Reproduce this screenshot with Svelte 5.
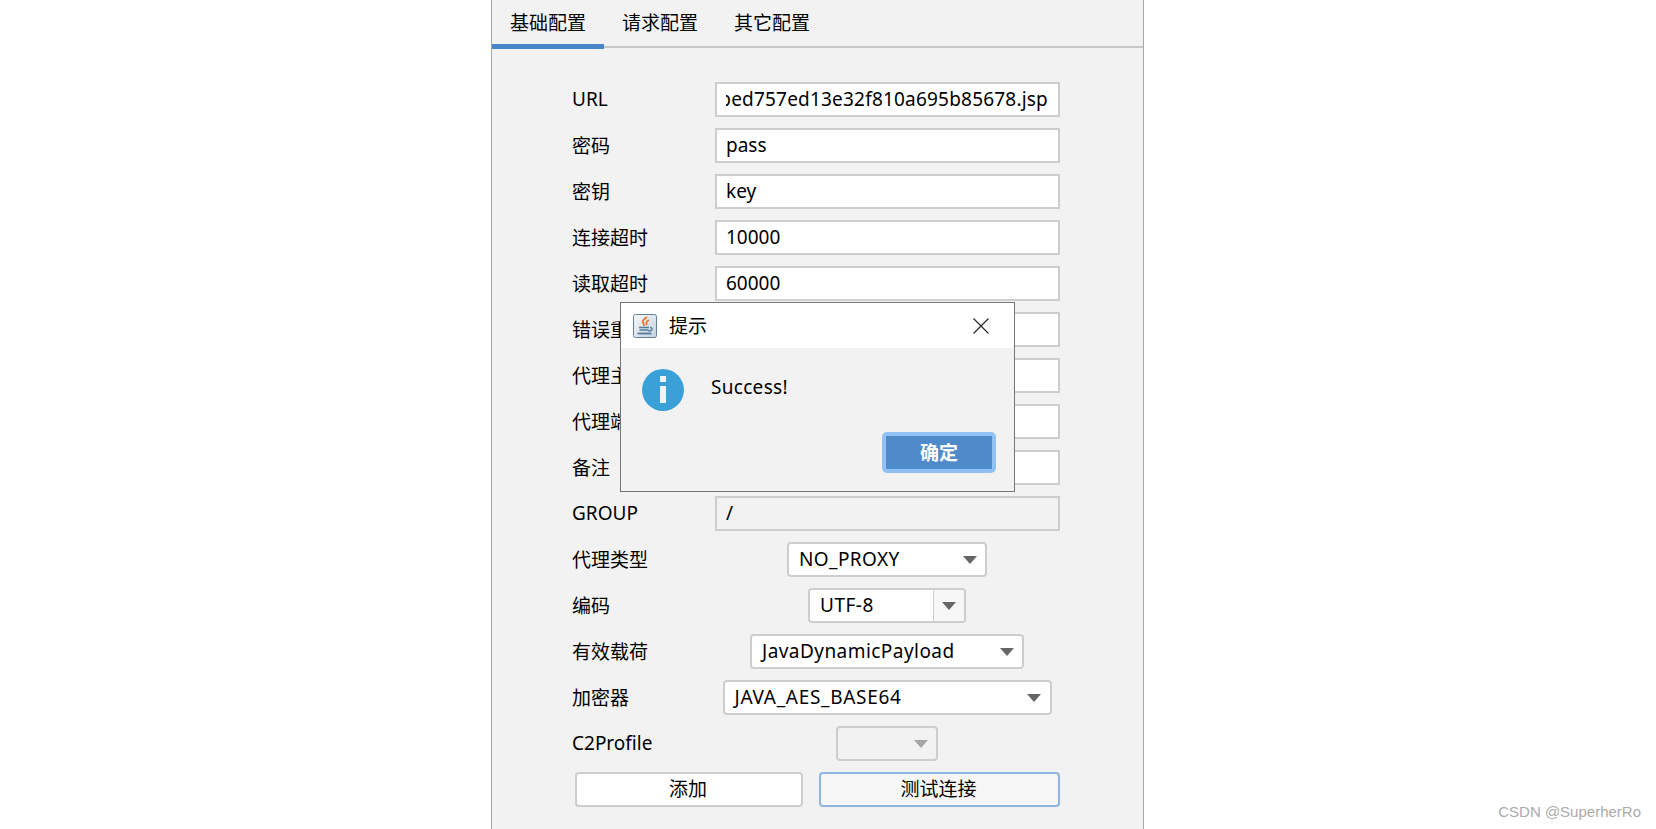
<script>
	const fields = [
		{ label: 'URL', value: 'bed757ed13e32f810a695b85678.jsp', scrolled: true },
		{ label: '密码', value: 'pass' },
		{ label: '密钥', value: 'key' },
		{ label: '连接超时', value: '10000' },
		{ label: '读取超时', value: '60000' },
		{ label: '错误重试', value: '' },
		{ label: '代理主机', value: '' },
		{ label: '代理端口', value: '' },
		{ label: '备注', value: '' },
		{ label: 'GROUP', value: '/', disabled: true }
	];

	const combos = [
		{ label: '代理类型', value: 'NO_PROXY', width: 200, spacing: 0.4 },
		{ label: '编码', value: 'UTF-8', width: 158, editable: true, spacing: 0.5 },
		{ label: '有效载荷', value: 'JavaDynamicPayload', width: 274, spacing: 0.45 },
		{ label: '加密器', value: 'JAVA_AES_BASE64', width: 329, spacing: 0.7 },
		{ label: 'C2Profile', value: '', width: 102, disabled: true, spacing: 0 }
	];

	const tabs = ['基础配置', '请求配置', '其它配置'];
</script>

<div class="panel">
	<div class="tabs">
		{#each tabs as tab, i}
			<div class="tab" class:active={i === 0}>{tab}</div>
		{/each}
	</div>

	<div class="form">
		{#each fields as field}
			<div class="row">
				<div class="label">{field.label}</div>
				<div class="input" class:disabled={field.disabled} class:scrolled={field.scrolled}>
					<div class="input-text"><span>{field.value}</span></div>
				</div>
			</div>
		{/each}

		{#each combos as combo}
			<div class="row">
				<div class="label">{combo.label}</div>
				<div class="combo-cell">
					<div class="combo" class:disabled={combo.disabled} class:editable={combo.editable} style="width: {combo.width}px">
						<span class="combo-value" style="letter-spacing: {combo.spacing}px">{combo.value}</span>
						<span class="combo-btn"><i class="arrow"></i></span>
					</div>
				</div>
			</div>
		{/each}

		<div class="actions">
			<button class="btn add"><span>添加</span></button>
			<button class="btn test"><span>测试连接</span></button>
		</div>
	</div>

	<div class="dialog">
		<div class="titlebar">
			<svg class="java-icon" width="24" height="24" viewBox="0 0 24 24">
				<defs>
					<linearGradient id="jbg" x1="0" y1="0" x2="1" y2="1">
						<stop offset="0" stop-color="#f8f9fb" />
						<stop offset="1" stop-color="#c4d2df" />
					</linearGradient>
				</defs>
				<rect x="0.5" y="0.5" width="23" height="23" rx="2" fill="url(#jbg)" stroke="#64819a" />
				<path d="M14 3c-3.500 2.500-5.500 4-3.500 6.500.6.800.8 1.500.3 2.500M16 6c-2.500 1.500-3.500 3-2 5" fill="none" stroke="#e8752a" stroke-width="1.800" />
				<path d="M6 13.500h10M6.500 16h9M17 13.500c3 0 3 3-1.500 3.500" fill="none" stroke="#567b9b" stroke-width="1.300" />
				<path d="M4.500 19.500h14" fill="none" stroke="#567b9b" stroke-width="1.800" />
			</svg>
			<span class="title">提示</span>
			<svg class="close" width="16" height="16" viewBox="0 0 16 16">
				<path d="M.5.5l15 15M15.500.5l-15 15" stroke="#222" stroke-width="1.100" fill="none" />
			</svg>
		</div>
		<div class="dialog-body">
			<div class="message">
				<svg class="info" width="42" height="42" viewBox="0 0 42 42">
					<circle cx="21" cy="21" r="21" fill="#3aa1d8" />
					<rect x="18" y="7" width="6" height="6" fill="#eef5fa" />
					<rect x="18" y="17" width="6" height="17" fill="#eef5fa" />
				</svg>
				<span class="message-text">Success!</span>
			</div>
			<div class="dialog-actions">
				<button class="ok"><span>确定</span></button>
			</div>
		</div>
	</div>
</div>

<div class="watermark">CSDN @SuperherRo</div>

<style>
	:global(body) {
		background: #fff;
	}

	.panel {
		position: relative;
		box-sizing: border-box;
		width: 653px;
		height: 829px;
		margin-left: 491px;
		background: #f2f2f2;
		border-left: 1px solid #a6a6a6;
		border-right: 1px solid #a6a6a6;
		font-family: 'Noto Sans', 'Noto Sans CJK SC', sans-serif;
		font-size: 19px;
		color: #000;
	}

	.tabs {
		display: flex;
		height: 48px;
		box-sizing: border-box;
		border-bottom: 2px solid #c8c8c8;
	}

	.tab {
		padding: 0 18px;
		height: 49px;
		line-height: 47px;
		box-sizing: border-box;
		width: 112px;
		white-space: nowrap;
	}

	.tab.active {
		border-bottom: 5px solid #4585c8;
	}

	.form {
		display: flex;
		flex-direction: column;
		gap: 11px;
		padding: 34px 83px 0 80px;
	}

	.row {
		display: flex;
		height: 35px;
		align-items: center;
	}

	.label {
		flex: 0 0 143px;
		white-space: nowrap;
		padding-bottom: 2px;
	}

	.input {
		flex: 1;
		min-width: 0;
		display: flex;
		align-items: center;
		height: 35px;
		box-sizing: border-box;
		padding: 0 10px 2px 9px;
		background: #fff;
		border: 2px solid #cdcdcd;
		white-space: nowrap;
	}

	.input-text {
		flex: 1;
		min-width: 0;
		display: flex;
		overflow: hidden;
	}

	.input-text span {
		flex: none;
	}

	.input.scrolled .input-text {
		justify-content: flex-end;
		letter-spacing: 0.2px;
	}

	.input.disabled {
		background: #f2f2f2;
	}

	.combo-cell {
		flex: 1;
		display: flex;
		justify-content: center;
		padding-right: 1px;
	}

	.combo {
		display: flex;
		align-items: center;
		height: 35px;
		box-sizing: border-box;
		background: #fff;
		border: 2px solid #cdcdcd;
		border-radius: 4px;
		overflow: hidden;
	}

	.combo-value {
		flex: 1;
		padding: 0 0 2px 10px;
		white-space: nowrap;
	}

	.combo-btn {
		display: flex;
		align-items: center;
		justify-content: center;
		box-sizing: border-box;
		width: 31px;
		height: 100%;
	}

	.combo.editable .combo-btn {
		background: #f7f7f7;
		border-left: 1px solid #cdcdcd;
	}

	.combo.disabled {
		background: #f2f2f2;
	}

	.arrow {
		display: block;
		width: 0;
		height: 0;
		border-left: 7px solid transparent;
		border-right: 7px solid transparent;
		border-top: 8px solid #666;
	}

	.combo.disabled .arrow {
		border-top-color: #a6a6a6;
	}

	.actions {
		display: flex;
		gap: 16px;
		padding-left: 3px;
	}

	.btn {
		height: 35px;
		box-sizing: border-box;
		font: inherit;
		color: #000;
		padding: 0 2px 4px 0;
		border-radius: 4px;
	}

	.add {
		width: 228px;
		background: #fff;
		border: 2px solid #cdcdcd;
	}

	.test {
		width: 241px;
		background: #f6f6f6;
		border: 2px solid #8fb6de;
	}

	.dialog {
		position: absolute;
		left: 128px;
		top: 302px;
		box-sizing: border-box;
		width: 395px;
		height: 190px;
		background: #f2f2f2;
		border: 1px solid #757575;
	}

	.titlebar {
		display: flex;
		align-items: center;
		height: 45px;
		background: #fff;
		padding: 0 25px 0 12px;
	}

	.java-icon {
		flex: none;
	}

	.title {
		flex: 1;
		margin-left: 12px;
		padding-bottom: 2px;
	}

	.dialog-body {
		padding: 21px 18px 0 21px;
	}

	.message {
		display: flex;
		height: 63px;
		align-items: flex-start;
		gap: 27px;
	}

	.message-text {
		line-height: 37px;
		letter-spacing: 0.3px;
	}

	.dialog-actions {
		display: flex;
		justify-content: flex-end;
	}

	.ok {
		width: 114px;
		height: 41px;
		box-sizing: border-box;
		padding: 0 0 2px;
		background: #4f8aca;
		border: 4px solid #90c0f4;
		border-radius: 5px;
		color: #fff;
		font: inherit;
		font-weight: 700;
	}

	.watermark {
		position: absolute;
		right: 15px;
		top: 803px;
		font-family: 'Liberation Sans', sans-serif;
		font-size: 15px;
		color: #ababab;
		white-space: nowrap;
	}
</style>
